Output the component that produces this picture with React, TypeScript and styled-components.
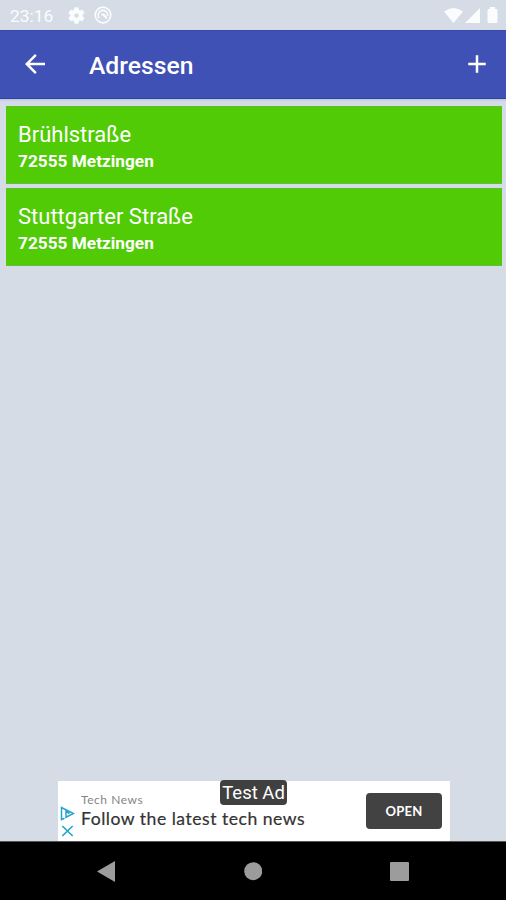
import React from "react";
import styled, { createGlobalStyle } from "styled-components";

const GlobalStyle = createGlobalStyle`
  * { box-sizing: border-box; }
  body { margin: 0; background: #d5dce5; }
`;

const Screen = styled.div`
  width: 506px;
  height: 900px;
  display: flex;
  flex-direction: column;
  overflow: hidden;
  background: #d5dce5;
  color: #fff;
  font-family: Roboto, "Liberation Sans", sans-serif;
`;

const StatusBar = styled.header`
  height: 30px;
  flex: none;
  display: flex;
  align-items: center;
  padding: 1px 5px 0 10px;
  color: #fbfcfd;
`;

const Clock = styled.time`
  width: 57px;
  font-size: 17.4px;
  line-height: 30px;
`;

const StatusGroup = styled.div<{ $end?: boolean }>`
  display: flex;
  align-items: center;
  gap: ${(p) => (p.$end ? "2px" : "8px")};
  margin-left: ${(p) => (p.$end ? "auto" : "0")};
  padding-bottom: 1px;
`;

const Glyph = styled.svg`
  display: block;
  flex: none;
  fill: currentColor;
`;

const AppBar = styled.nav`
  height: 69px;
  flex: none;
  display: flex;
  align-items: center;
  padding: 0 14px 0 20px;
  background: #3f51b5;
  border-top: 1px solid #3849ab;
  border-bottom: 1px solid #3041a8;
  box-shadow: 0 1px 2px #b4bfdc;
`;

const IconButton = styled.button`
  display: flex;
  padding: 0 0 2px;
  border: 0;
  background: none;
  color: #fff;
`;

const Title = styled.h1`
  flex: 1;
  margin: 2px 0 0 39px;
  font-size: 24.7px;
  font-weight: 500;
  line-height: 32px;
`;

const AddressList = styled.main`
  flex: 1;
  display: flex;
  flex-direction: column;
  gap: 4px;
  padding: 7px 4px 0 6px;
`;

const AddressCard = styled.article`
  height: 78px;
  padding: 14px 12px 0;
  background: #50cb05;
  border-top: 1px solid #5abf2c;
  border-bottom: 1px solid #65bd3d;
`;

const Street = styled.div`
  font-size: 22px;
  line-height: 27px;
`;

const City = styled.div`
  font-size: 17.2px;
  letter-spacing: 0.03px;
  font-weight: 700;
  line-height: 26px;
`;

const Ad = styled.aside`
  position: relative;
  width: 392px;
  height: 60px;
  flex: none;
  margin-left: 58px;
  padding-right: 8px;
  display: flex;
  align-items: center;
  background: #fff;
  color: #333;
`;

const AdMarks = styled.div`
  width: 23px;
  display: flex;
  flex-direction: column;
  gap: 4px;
  padding: 21px 0 0 2px;
`;

const AdCopy = styled.div`
  flex: 1;
`;

const AdSource = styled.div`
  font-family: Lato, sans-serif;
  font-size: 12px;
  letter-spacing: 0.55px;
  line-height: 15px;
  color: #858585;
`;

const AdHeadline = styled.div`
  font-family: Lato, sans-serif;
  font-size: 17.6px;
  letter-spacing: 0.5px;
  line-height: 23px;
  white-space: nowrap;
  -webkit-text-stroke: 0.2px #333;
`;

const OpenButton = styled.button`
  width: 76px;
  height: 36px;
  padding: 0 0 1px;
  border: 0;
  border-radius: 4px;
  background: #424242;
  color: #fff;
  font: 700 13px Lato, sans-serif;
  letter-spacing: 0.3px;
`;

const TestLabel = styled.div`
  position: absolute;
  top: -1px;
  left: 162px;
  width: 67px;
  height: 25px;
  border-radius: 4px;
  background: #404040;
  color: #fff;
  font-size: 18.5px;
  line-height: 27px;
  text-align: center;
  white-space: nowrap;
`;

const SystemNav = styled.footer`
  height: 59px;
  flex: none;
  display: flex;
  justify-content: space-between;
  padding: 19px 97px 0;
  background: #000;
  border-top: 1px solid #555;
  color: #9c9c9c;
`;

const addresses = [
  { street: "Brühlstraße", city: "72555 Metzingen" },
  { street: "Stuttgarter Straße", city: "72555 Metzingen" },
];

export default function App() {
  return (
    <Screen>
      <GlobalStyle />
      <StatusBar>
        <Clock>23:16</Clock>
        <StatusGroup>
          <Glyph width="19" height="19" viewBox="0 0 24 24">
            <path d="M19.400 13c.1-.6.1-1.400 0-2l2.100-1.600c.2-.2.2-.4.100-.6l-2-3.500c-.1-.2-.4-.3-.6-.2l-2.500 1c-.5-.4-1.100-.7-1.700-1l-.4-2.600c0-.3-.2-.5-.5-.5h-4c-.2 0-.4.2-.5.5L9 5.100c-.6.3-1.200.6-1.700 1l-2.500-1c-.2-.1-.5 0-.6.2l-2 3.500c-.1.2-.1.5.1.6L4.400 11v2l-2.100 1.600c-.2.2-.2.400-.1.600l2 3.500c.1.200.4.300.6.200l2.500-1c.5.400 1.100.700 1.700 1l.4 2.600c.1.300.3.500.5.500h4c.3 0 .5-.2.500-.5l.4-2.600c.6-.3 1.200-.6 1.700-1l2.500 1c.2.100.5 0 .6-.2l2-3.500c.1-.2.100-.5-.1-.6zM12 15a3 3 0 1 1 0-6 3 3 0 0 1 0 6z" stroke="currentColor" strokeWidth=".6" />
          </Glyph>
          <Glyph width="18" height="18" viewBox="0 0 18 18">
            <g fill="none" stroke="currentColor">
              <circle cx="9" cy="9" r="7.800" strokeWidth="1.700" />
              <path d="M5.200 12.200A4.800 4.800 0 1 1 13.700 9.800" strokeWidth="1.600" />
              <path d="M7.300 8.300L9.500 8.800 13 12.300" strokeWidth="2.200" />
            </g>
          </Glyph>
        </StatusGroup>
        <StatusGroup $end>
          <Glyph width="19" height="17" viewBox="0 0 19 17">
            <path d="M0 4.500Q9.500-2.500 19 4.500L9.500 16z" />
          </Glyph>
          <Glyph width="16" height="17" viewBox="0 0 16 17">
            <path d="M0 16L15 1v15z" />
          </Glyph>
          <Glyph width="18" height="18" viewBox="0 0 18 18">
            <path d="M7 1h5v2h1.500q1 0 1 1v12q0 1-1 1h-8q-1 0-1-1V4q0-1 1-1H7z" />
          </Glyph>
        </StatusGroup>
      </StatusBar>
      <AppBar>
        <IconButton aria-label="Zurück">
          <Glyph width="30" height="30" viewBox="0 0 24 24">
            <path d="M20 11H7.830l5.590-5.590L12 4l-8 8 8 8 1.410-1.410L7.830 13H20z" />
          </Glyph>
        </IconButton>
        <Title>Adressen</Title>
        <IconButton aria-label="Hinzufügen">
          <Glyph width="30" height="30" viewBox="0 0 24 24">
            <path d="M19 13h-6v6h-2v-6H5v-2h6V5h2v6h6z" />
          </Glyph>
        </IconButton>
      </AppBar>
      <AddressList>
        {addresses.map((a) => (
          <AddressCard key={a.street}>
            <Street>{a.street}</Street>
            <City>{a.city}</City>
          </AddressCard>
        ))}
      </AddressList>
      <Ad>
        <AdMarks>
          <Glyph width="15" height="15" viewBox="0 0 15 15">
            <path d="M4.500 12.200L1.500 13.500v-12L13.500 7.500 6 11.200V5.500l3.500 2" fill="none" stroke="#24a5ce" strokeWidth="1.500" />
          </Glyph>
          <Glyph width="15" height="12" viewBox="0 0 15 12">
            <path d="M2.300 1l10.400 10m0-10L2.300 11" fill="none" stroke="#24a5ce" strokeWidth="1.700" />
          </Glyph>
        </AdMarks>
        <AdCopy>
          <AdSource>Tech News</AdSource>
          <AdHeadline>Follow the latest tech news</AdHeadline>
        </AdCopy>
        <OpenButton>OPEN</OpenButton>
        <TestLabel>Test Ad</TestLabel>
      </Ad>
      <SystemNav>
        <Glyph width="18" height="21" viewBox="0 0 18 21">
          <path d="M18 0v21L0 10.500z" />
        </Glyph>
        <Glyph width="19" height="21" viewBox="0 0 19 21">
          <circle cx="10.200" cy="10.200" r="9" />
        </Glyph>
        <Glyph width="19" height="21" viewBox="0 0 19 21">
          <rect y="1" width="19" height="19" rx="1" />
        </Glyph>
      </SystemNav>
    </Screen>
  );
}
